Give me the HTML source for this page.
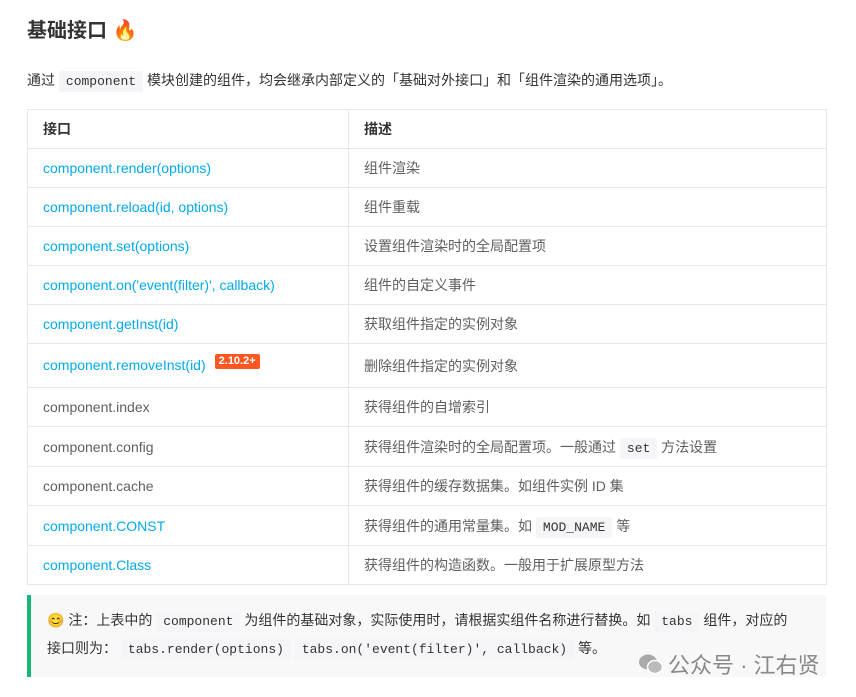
<!DOCTYPE html>
<html><head><meta charset="utf-8"><style>
body{margin:0;background:#fff;font-family:"Liberation Sans","Noto Sans CJK SC",sans-serif;color:#333;font-size:14px;width:856px;height:697px;overflow:hidden;position:relative}
h2{position:absolute;left:27px;top:14px;margin:0;font-size:20px;font-weight:bold;color:#333;line-height:34px}
p.intro{position:absolute;left:27px;top:68px;margin:0;line-height:24px;color:#333}
code{font-family:"Liberation Mono",monospace;font-size:13px;background:#f5f5f7;padding:3px 7px;color:#333;border-radius:2px}
table{position:absolute;left:27px;top:109px;width:800px;border-collapse:collapse}
td,th{border:1px solid #e8e8e8;padding:0 15px;text-align:left;color:#5f5f5f;font-size:14px}
th{font-weight:bold;color:#333;height:38px}
td{height:38px}
td:first-child,th:first-child{width:290px}
a{color:#01AAED;text-decoration:none}
.badge{display:inline-block;background:#ff5722;color:#fff;font-size:11px;font-weight:bold;padding:0 4px;line-height:15px;border-radius:2px;margin-left:9px;position:relative;top:-6px}
.note{position:absolute;left:27px;top:595px;width:751px;height:70px;background:#f8f8f9;border-left:4px solid #16b777;padding:12px 28px 0 16px;line-height:26px;color:#333}
.wm{position:absolute;left:638px;top:648px;color:#888;font-size:22px;display:flex;align-items:center;gap:4px}
</style></head><body>
<h2>基础接口 <span style="font-size:20px">🔥</span></h2>
<p class="intro">通过 <code>component</code> 模块创建的组件，均会继承内部定义的「基础对外接口」和「组件渲染的通用选项」。</p>
<table>
<tr><th>接口</th><th>描述</th></tr>
<tr><td><a>component.render(options)</a></td><td>组件渲染</td></tr>
<tr><td><a>component.reload(id, options)</a></td><td>组件重载</td></tr>
<tr><td><a>component.set(options)</a></td><td>设置组件渲染时的全局配置项</td></tr>
<tr><td><a>component.on('event(filter)', callback)</a></td><td>组件的自定义事件</td></tr>
<tr><td><a>component.getInst(id)</a></td><td>获取组件指定的实例对象</td></tr>
<tr><td style="height:43px"><a>component.removeInst(id)</a><span class="badge">2.10.2+</span></td><td>删除组件指定的实例对象</td></tr>
<tr><td>component.index</td><td>获得组件的自增索引</td></tr>
<tr><td style="height:39px">component.config</td><td>获得组件渲染时的全局配置项。一般通过 <code>set</code> 方法设置</td></tr>
<tr><td>component.cache</td><td>获得组件的缓存数据集。如组件实例 ID 集</td></tr>
<tr><td style="height:39px"><a>component.CONST</a></td><td>获得组件的通用常量集。如 <code>MOD_NAME</code> 等</td></tr>
<tr><td><a>component.Class</a></td><td>获得组件的构造函数。一般用于扩展原型方法</td></tr>
</table>
<div class="note">😊 注：上表中的 <code>component</code> 为组件的基础对象，实际使用时，请根据实组件名称进行替换。如 <code>tabs</code> 组件，对应的接口则为： <code>tabs.render(options)</code> <code>tabs.on('event(filter)', callback)</code> 等。</div>
<div class="wm"><svg width="26" height="22" viewBox="0 0 26 22"><ellipse cx="10" cy="9" rx="9" ry="7.5" fill="#aaa"/><ellipse cx="17" cy="14" rx="7.5" ry="6.5" fill="#bbb" stroke="#fff" stroke-width="1.5"/></svg>公众号 · 江右贤</div>
</body></html>
